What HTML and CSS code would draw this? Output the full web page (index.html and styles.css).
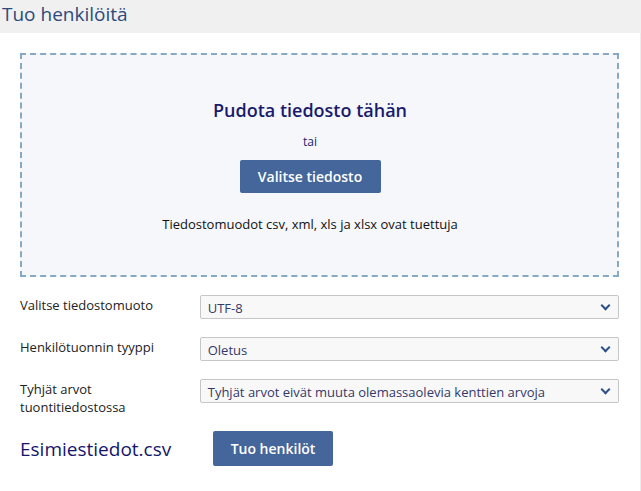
FILE: index.html
```html
<!DOCTYPE html>
<html>

<head>
  <meta charset="utf-8">
  <title>Tuo henkilöitä</title>
  <link rel="stylesheet" href="styles.css">
</head>

<body>
  <div class="m-import">
    <h1 class="title">Tuo henkilöitä</h1>
    <div class="cnt">
      <div class="drop">
        <p class="drop-title">Pudota tiedosto tähän</p>
        <p class="drop-or">tai</p>
        <button class="btn">Valitse tiedosto</button>
        <p class="drop-note">Tiedostomuodot csv, xml, xls ja xlsx ovat tuettuja</p>
      </div>
      <div class="row">
        <label class="lbl">Valitse tiedostomuoto</label>
        <div class="sel"><span>UTF-8</span><i class="chev"></i></div>
      </div>
      <div class="row">
        <label class="lbl">Henkilötuonnin tyyppi</label>
        <div class="sel"><span>Oletus</span><i class="chev"></i></div>
      </div>
      <div class="row">
        <label class="lbl">Tyhjät arvot tuontitiedostossa</label>
        <div class="sel"><span>Tyhjät arvot eivät muuta olemassaolevia kenttien arvoja</span><i class="chev"></i></div>
      </div>
      <div class="foot">
        <span class="file">Esimiestiedot.csv</span>
        <button class="btn btn-go">Tuo henkilöt</button>
      </div>
    </div>
  </div>
</body>

</html>
```

FILE: styles.css
```css
* {
  margin: 0;
  padding: 0;
  box-sizing: border-box;
}

body {
  font-family: "Open Sans", "Liberation Sans", sans-serif;
  background: #fff;
  overflow: hidden;
}

.m-import {
  width: 641px;
}

.m-import .title {
  height: 33px;
  padding: 1px 2px 0;
  background: #f0f0f0;
  font-size: 19px;
  font-weight: normal;
  line-height: 26px;
  color: #2d4a7c;
}

.m-import .cnt {
  width: 641px;
  height: 458px;
  padding: 20px 21px 0 20px;
  border-right: 1px solid #ececec;
}

.drop {
  height: 224px;
  border: 2px dashed #86a9c4;
  background: #f5f7fb;
  display: flex;
  flex-direction: column;
  align-items: center;
  padding: 42px 19px 0 0;
}

.drop-title {
  font-size: 18px;
  font-weight: 600;
  line-height: 26px;
  color: #1b1b6e;
}

.drop-or {
  margin-top: 11px;
  font-size: 12px;
  line-height: 16px;
  color: #1b1b6e;
}

.btn {
  border: 0;
  border-radius: 2px;
  background: #44669b;
  color: #fff;
  font-family: inherit;
  font-size: 14px;
  font-weight: 600;
}

.drop .btn {
  margin-top: 10px;
  width: 141px;
  height: 33px;
}

.drop-note {
  margin-top: 22px;
  font-size: 13px;
  line-height: 18px;
  color: #111;
}

.row {
  display: flex;
  align-items: flex-start;
  margin-top: 18px;
}

.row + .row {
  margin-top: 18px;
}

.lbl {
  width: 180px;
  padding: 1px 20px 0 0;
  font-size: 13px;
  line-height: 18px;
  color: #222;
}

.sel {
  width: 420px;
  height: 24px;
  display: flex;
  align-items: center;
  justify-content: space-between;
  padding: 0 9px 0 7px;
  border: 1px solid #c6c6c6;
  border-radius: 2px;
  background: #f8f8f8;
  font-size: 13px;
  color: #33396a;
}

.sel span {
  padding-top: 2px;
}

.chev {
  width: 7px;
  height: 7px;
  border-right: 2.5px solid #2d4f8a;
  border-bottom: 2.5px solid #2d4f8a;
  transform: rotate(45deg);
  margin-top: -3px;
}

.foot {
  display: flex;
  align-items: center;
  margin-top: 15px;
}

.file {
  width: 193px;
  font-size: 19px;
  line-height: 26px;
  color: #15156c;
}

.btn-go {
  width: 120px;
  height: 35px;
}
```
